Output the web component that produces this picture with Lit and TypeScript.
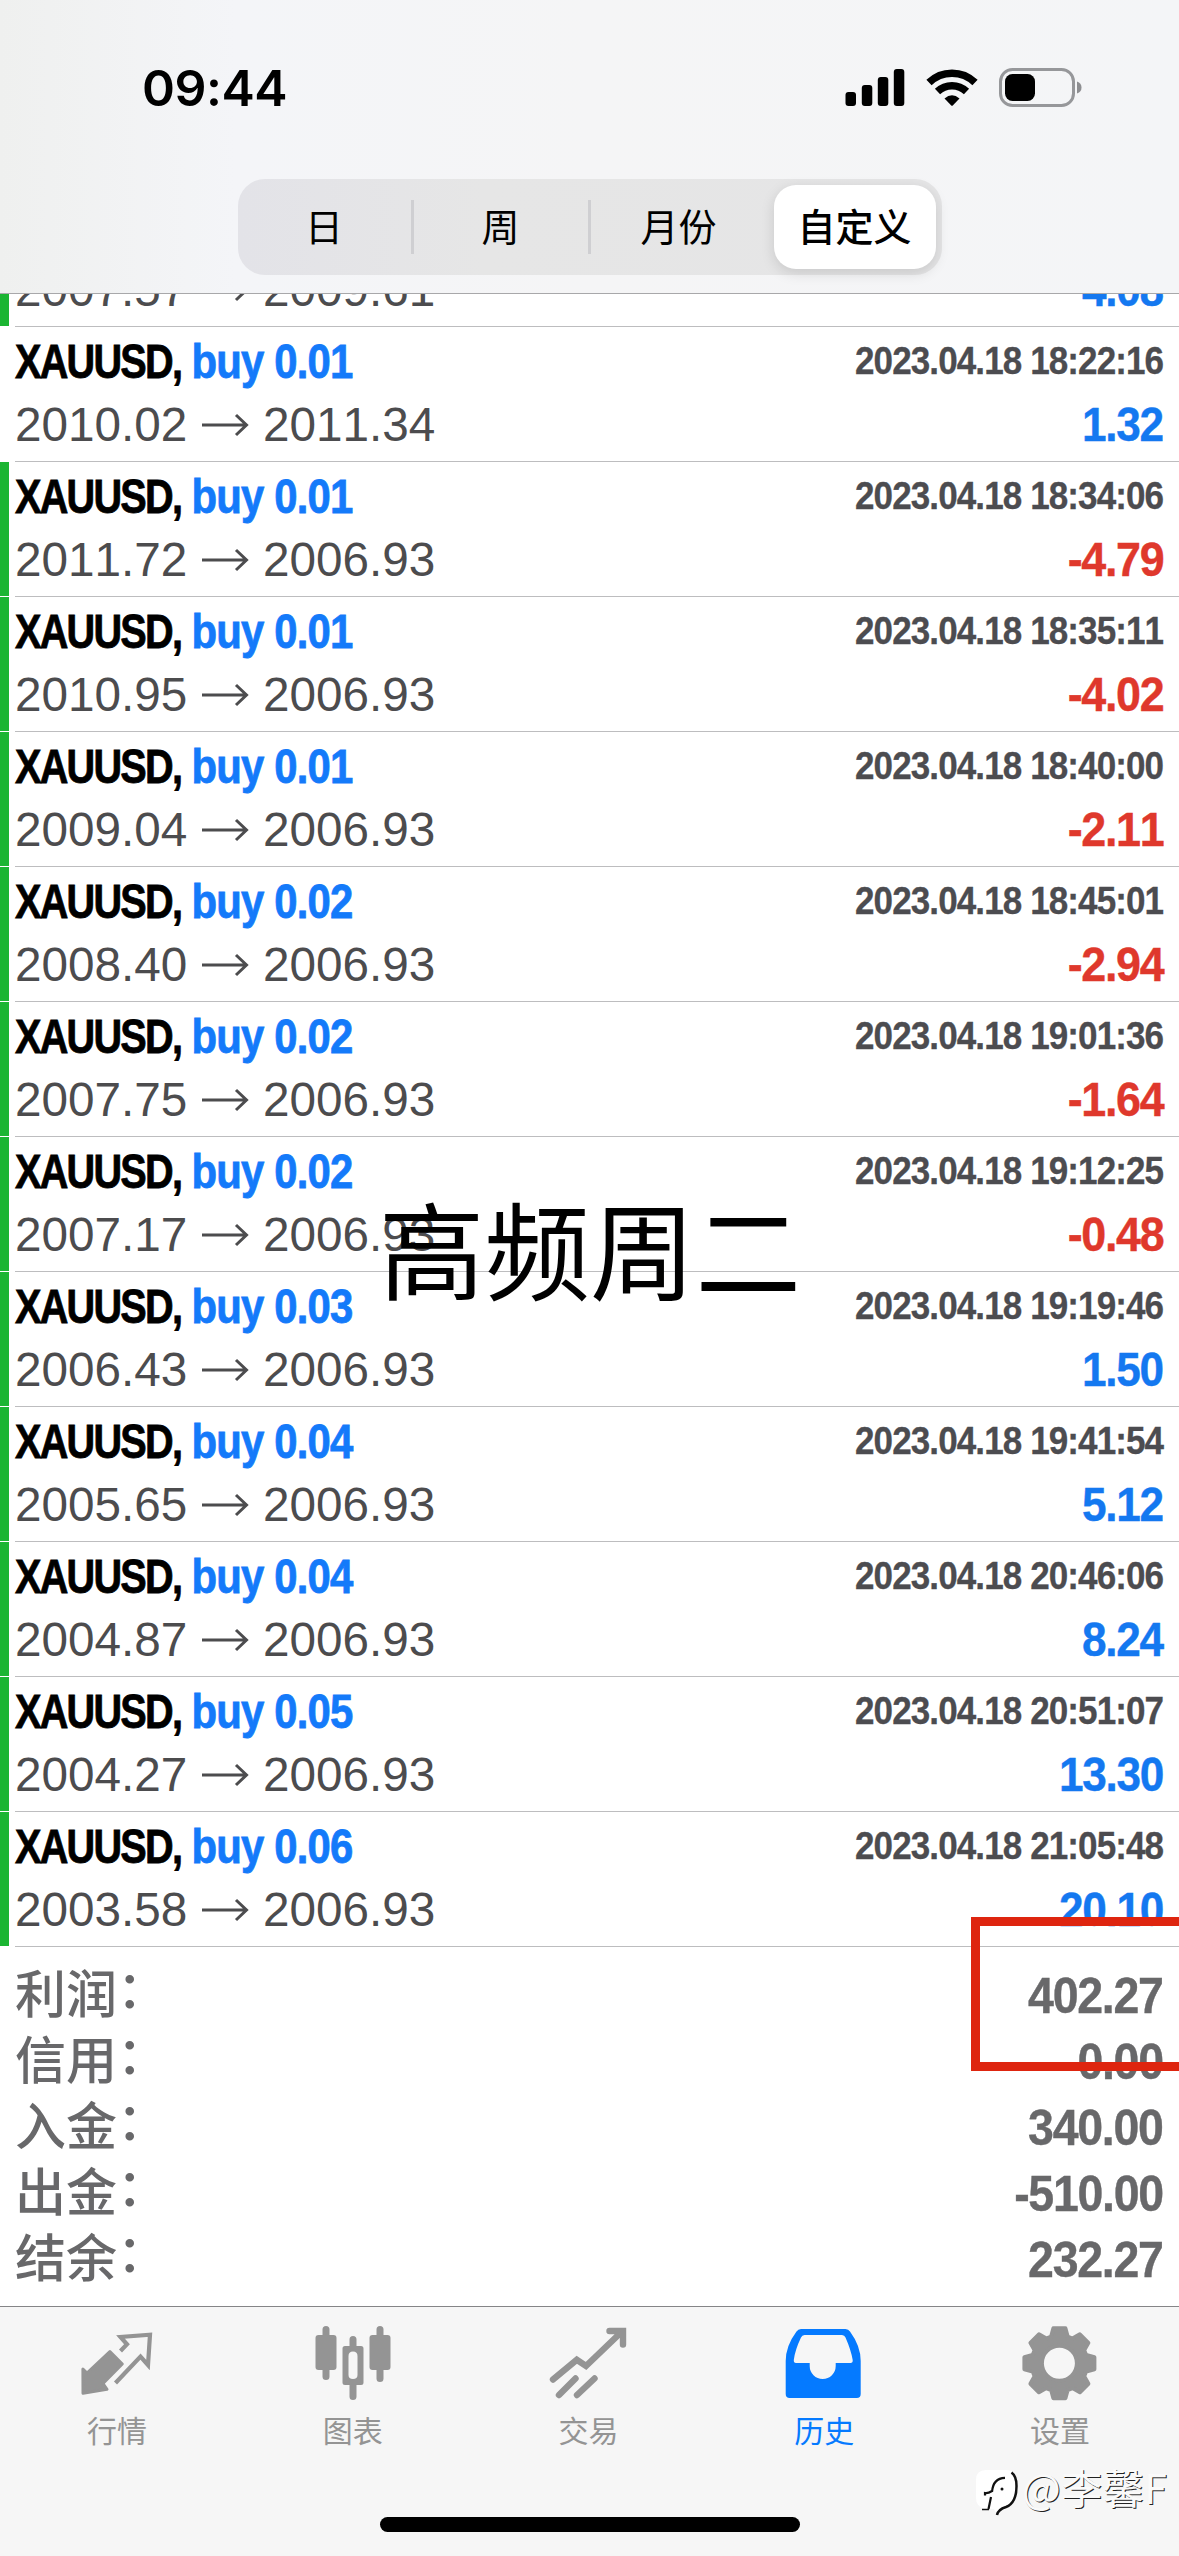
import { LitElement, html, svg, css, nothing } from "lit";
import { customElement, property } from "lit/decorators.js";
import { classMap } from "lit/directives/class-map.js";

type Deal = { lots?: string; open: string; close: string; time?: string; profit: string; marked: boolean };

const DEALS: Deal[] = [
  { open: "2007.57", close: "2009.61", profit: "4.08", marked: true },
  { lots: "0.01", open: "2010.02", close: "2011.34", time: "2023.04.18 18:22:16", profit: "1.32", marked: false },
  { lots: "0.01", open: "2011.72", close: "2006.93", time: "2023.04.18 18:34:06", profit: "-4.79", marked: true },
  { lots: "0.01", open: "2010.95", close: "2006.93", time: "2023.04.18 18:35:11", profit: "-4.02", marked: true },
  { lots: "0.01", open: "2009.04", close: "2006.93", time: "2023.04.18 18:40:00", profit: "-2.11", marked: true },
  { lots: "0.02", open: "2008.40", close: "2006.93", time: "2023.04.18 18:45:01", profit: "-2.94", marked: true },
  { lots: "0.02", open: "2007.75", close: "2006.93", time: "2023.04.18 19:01:36", profit: "-1.64", marked: true },
  { lots: "0.02", open: "2007.17", close: "2006.93", time: "2023.04.18 19:12:25", profit: "-0.48", marked: true },
  { lots: "0.03", open: "2006.43", close: "2006.93", time: "2023.04.18 19:19:46", profit: "1.50", marked: true },
  { lots: "0.04", open: "2005.65", close: "2006.93", time: "2023.04.18 19:41:54", profit: "5.12", marked: true },
  { lots: "0.04", open: "2004.87", close: "2006.93", time: "2023.04.18 20:46:06", profit: "8.24", marked: true },
  { lots: "0.05", open: "2004.27", close: "2006.93", time: "2023.04.18 20:51:07", profit: "13.30", marked: true },
  { lots: "0.06", open: "2003.58", close: "2006.93", time: "2023.04.18 21:05:48", profit: "20.10", marked: true },
];

const TOTALS: [string, string][] = [
  ["利润", "402.27"],
  ["信用", "0.00"],
  ["入金", "340.00"],
  ["出金", "-510.00"],
  ["结余", "232.27"],
];

// Eight-toothed outline around (39.4, 41.3).
const GEAR = (() => {
  const pts: string[] = [];
  for (let i = 0; i < 8; i++) {
    const c = (i * Math.PI) / 4;
    for (const [d, r] of [[-0.3, 28], [-0.17, 35.5], [0.17, 35.5], [0.3, 28]]) {
      pts.push(`${(39.4 + r * Math.sin(c + d)).toFixed(2)} ${(41.3 - r * Math.cos(c + d)).toFixed(2)}`);
    }
  }
  return `M${pts.join("L")}Z`;
})();

const ICONS = {
  quotes: svg`
    <path d="M5.900 47 L10 51 L32.900 29.500 L45.300 42 L26 61.500 L30 67.300 L6 71.300 Z" fill="currentColor" stroke="currentColor" stroke-width="3" stroke-linejoin="round"/>
    <path d="M43.500 29 L50 22.300 L43.500 15 L73 12.700 L71 43 L63.500 34.500 L38.500 61" fill="none" stroke="currentColor" stroke-width="4.200"/>`,
  charts: svg`
    <path d="M13 7.500V54.500 M67 7.500V56.500 M40 17.500V26 M40 62V74.500" stroke="currentColor" stroke-width="7" stroke-linecap="round"/>
    <rect x="2.500" y="13" width="21" height="35" rx="3" fill="currentColor"/>
    <rect x="56.500" y="13" width="21" height="35" rx="3" fill="currentColor"/>
    <path fill="#f6f6f6" d="M34 28H46V60H34Z"/>
    <path fill="currentColor" fill-rule="evenodd" d="M32 24H48Q50.500 24 50.500 26.500V60.500Q50.500 63 48 63H32Q29.500 63 29.500 60.500V26.500Q29.500 24 32 24Z M40 29.500Q35.500 29.500 35.500 34V53Q35.500 57 40 57Q44.500 57 44.500 53V34Q44.500 29.500 40 29.500Z"/>`,
  trade: svg`
    <g fill="none" stroke="currentColor" stroke-width="6.400" stroke-linecap="round">
      <path d="M5 57.500 L28.800 37.800 L38 44 L74 9.500 M61.500 9 H75 V22.500"/>
      <path d="M11 73 L27.500 56.500 M29 73 L46.500 56.500"/>
    </g>`,
  history: svg`
    <path fill="currentColor" fill-rule="evenodd" d="M17 7 H61.500 Q64.500 7 66 9.500 Q76.700 24 76.700 39 V72 Q76.700 76 72.700 76 H5.700 Q1.700 76 1.700 72 V39 Q1.700 24 12.500 9.500 Q14 7 17 7 Z M20.500 13 Q18 13 17 15.500 Q11 28 9.800 38 Q9.600 41 12 41 H25.700 V44 A13 13 0 0 0 51.700 44 V41 H66.500 Q69 41 68.700 38 Q67 28 61.500 15.500 Q60.500 13 58 13 Z"/>`,
  settings: svg`
    <path d="${GEAR} M39.400 23.800a17.500 17.500 0 1 0 0 35a17.500 17.500 0 1 0 0-35Z" fill="currentColor" fill-rule="evenodd" stroke="currentColor" stroke-width="4" stroke-linejoin="round"/>`,
};

@customElement("status-bar")
class StatusBar extends LitElement {
  static styles = css`
    :host { display: flex; height: 179px; box-sizing: border-box; padding: 60px 97px 0 142px; justify-content: space-between; align-items: flex-start; }
    .time { font: 600 50px/56px Inter, "Liberation Sans", sans-serif; letter-spacing: -0.5px; color: #000; }
    .icons { display: block; margin-top: 7px; }
  `;
  render() {
    return html`
      <span class="time">09:44</span>
      <svg class="icons" width="238" height="42" viewBox="844 67 238 42">
        <rect x="845.500" y="92" width="10.500" height="14" rx="3"/>
        <rect x="861.800" y="85" width="10.500" height="21" rx="3"/>
        <rect x="877.800" y="77" width="10.500" height="29" rx="3"/>
        <rect x="893.800" y="69" width="10.500" height="37" rx="3"/>
        <g fill="none" stroke="#000" stroke-width="7.500">
          <path d="M929 82.500 A33 33 0 0 1 975 82.500"/>
          <path d="M937.500 91.500 A21 21 0 0 1 966.500 91.500"/>
        </g>
        <path d="M944.500 98.500 Q952 92 959.500 98.500 L953 105.200 Q952 106.200 951 105.200 Z"/>
        <rect x="1000.500" y="69.500" width="73" height="36" rx="12" fill="none" stroke="#96979a" stroke-width="3"/>
        <rect x="1005" y="74" width="30" height="27" rx="7.500"/>
        <path d="M1077 81.500 Q1081.500 83 1081.500 87.500 T1077 93.500 Z" fill="#8d8e91"/>
      </svg>`;
  }
}

@customElement("period-switch")
class PeriodSwitch extends LitElement {
  static styles = css`
    :host { display: grid; grid-template-columns: 176px 177px 183px 162px; width: 704px; height: 96px; margin: 0 auto; box-sizing: border-box; border-radius: 27px; background: linear-gradient(90deg, #e3e3e8, #e6e6e6 35%, #e5e5e6); padding: 6px 5px 6px 0; align-items: center; }
    .seg { height: 54px; box-sizing: border-box; border-right: 3px solid #cfcfd2; text-align: center; font: 400 38px/50px "Noto Sans CJK SC", sans-serif; color: #000; }
    .wide { border-color: transparent; padding-right: 4px; }
    .on { height: 84px; border: 0; background: #fff; border-radius: 22px; font-weight: 500; line-height: 80px; box-shadow: 0 4px 14px rgba(0, 0, 0, 0.13); }
  `;
  render() {
    return html`<span class="seg">日</span><span class="seg">周</span><span class="seg wide">月份</span><span class="seg on">自定义</span>`;
  }
}

@customElement("deal-row")
class DealRow extends LitElement {
  @property({ attribute: false }) deal!: Deal;
  static styles = css`
    :host { display: flex; height: 135px; font-family: "Liberation Sans", sans-serif; font-kerning: none; }
    .mark { width: 9px; height: 134px; flex: none; }
    .marked { background: #1bb532; }
    .body { flex: 1; margin-left: 6px; padding: 0 16px 0 0; border-bottom: 1px solid #bdbdbf; box-sizing: border-box; }
    .line { display: flex; justify-content: space-between; white-space: nowrap; }
    .top { height: 66px; }
    .name { font: bold 49px/68px "Liberation Sans", sans-serif; font-kerning: none; letter-spacing: -2.2px; transform: scaleX(0.81); transform-origin: 0 0; color: #000; -webkit-text-stroke: 0.8px currentColor; }
    .side { display: inline-block; color: #147afa; letter-spacing: -1px; margin-left: 1px; transform: scaleX(1.055); transform-origin: 0 0; }
    .time { font: bold 39px/68px "Liberation Sans", sans-serif; font-kerning: none; letter-spacing: -1px; transform: scaleX(0.898); transform-origin: 100% 0; color: #4c4c50; -webkit-text-stroke: 0.3px currentColor; }
    .prices { display: flex; align-items: center; font-size: 47.7px; line-height: 64px; color: #4c4c4e; }
    .arrow { margin: 0 12.500px 0 13px; }
    .profit { font: bold 48px/64px "Liberation Sans", sans-serif; font-kerning: none; letter-spacing: -1.4px; transform: scaleX(0.92); transform-origin: 100% 0; color: #1478f0; -webkit-text-stroke: 0.4px currentColor; }
    .loss { color: #df382c; transform: scaleX(0.935); }
  `;
  render() {
    const d = this.deal;
    return html`
      <div class=${classMap({ mark: true, marked: d.marked })}></div>
      <div class="body">
        <div class="line top">
          ${d.time
            ? html`<span class="name">XAUUSD, <span class="side">buy ${d.lots}</span></span>
                <span class="time">${d.time}</span>`
            : nothing}
        </div>
        <div class="line">
          <span class="prices">${d.open}<svg class="arrow" width="50" height="24" viewBox="0 0 50 24"><path d="M2 12H46M36 2L46.500 12L36 22" fill="none" stroke="currentColor" stroke-width="3"/></svg>${d.close}</span>
          <span class=${classMap({ profit: true, loss: d.profit.startsWith("-") })}>${d.profit}</span>
        </div>
      </div>`;
  }
}

@customElement("account-totals")
class AccountTotals extends LitElement {
  static styles = css`
    :host { display: block; padding: 15px 16px 0 15px; box-sizing: border-box; height: 359px; }
    .row { display: flex; justify-content: space-between; height: 66px; color: #68686a; }
    .label { display: flex; font: 500 51px/59px "Noto Sans CJK SC", sans-serif; }
    .colon { line-height: 49px; }
    .value { font: bold 50px/68px "Liberation Sans", sans-serif; font-kerning: none; letter-spacing: -1.4px; transform: scaleX(0.93); transform-origin: 100% 0; -webkit-text-stroke: 0.4px currentColor; }
  `;
  render() {
    return html`${TOTALS.map(
      ([k, v]) => html`<div class="row"><span class="label">${k}<span class="colon">：</span></span><span class="value">${v}</span></div>`
    )}`;
  }
}

@customElement("tab-bar")
class TabBar extends LitElement {
  static styles = css`
    :host { display: flex; flex-direction: column; height: 250px; box-sizing: border-box; background: #f6f6f6; border-top: 1px solid #858587; }
    .tabs { display: flex; height: 210px; }
    .tab { flex: 1; display: flex; flex-direction: column; align-items: center; color: #949494; padding: 15px 2px 0 0; }
    .active { color: #057aff; }
    .icon { display: block; }
    .name { font: 400 30px/42px "Noto Sans CJK SC", sans-serif; }
    .home { width: 420px; height: 15px; border-radius: 8px; background: #000; margin: 0 auto; }
  `;
  render() {
    const tabs = [
      [ICONS.quotes, "行情"],
      [ICONS.charts, "图表"],
      [ICONS.trade, "交易"],
      [ICONS.history, "历史"],
      [ICONS.settings, "设置"],
    ] as const;
    return html`
      <div class="tabs">
        ${tabs.map(
          ([icon, name]) => html`<div class=${classMap({ tab: true, active: name === "历史" })}>
            <svg class="icon" width="80" height="86" viewBox="0 0 80 86">${icon}</svg>
            <span class="name">${name}</span>
          </div>`
        )}
      </div>
      <div class="home"></div>`;
  }
}

@customElement("app-root")
class AppRoot extends LitElement {
  static styles = css`
    :host { display: block; width: 1179px; height: 2556px; position: relative; overflow: hidden; background: #fff; }
    .screen { display: flex; flex-direction: column; height: 2556px; }
    .header { height: 294px; flex: none; box-sizing: border-box; border-bottom: 1px solid #a8a8aa; background: linear-gradient(90deg, #eff0ef, #f4f5f8 20%, #f5f5f6 50%, #f4f5f7); }
    .list { height: 1653px; flex: none; overflow: hidden; display: flex; flex-direction: column; justify-content: flex-end; }
    .list deal-row { flex: none; }
    .caption { position: absolute; left: 379px; top: 1168px; font: 400 105.500px/156px "Noto Sans CJK SC", sans-serif; color: #000; white-space: nowrap; }
    .frame { position: absolute; left: 971px; top: 1917px; width: 230px; height: 154px; box-sizing: border-box; border: 9px solid #de250f; }
    .credit { position: absolute; left: 976px; top: 2466px; display: flex; align-items: flex-start; color: #fafafa; font: 400 41px/40px "Noto Sans CJK SC", sans-serif; white-space: nowrap; }
    .author { text-shadow: 1px 1px 0.500px #222; letter-spacing: 0.5px; }
  `;
  render() {
    return html`
      <div class="screen">
        <div class="header">
          <status-bar></status-bar>
          <period-switch></period-switch>
        </div>
        <div class="list">${DEALS.map((d) => html`<deal-row .deal=${d}></deal-row>`)}</div>
        <account-totals></account-totals>
        <tab-bar></tab-bar>
      </div>
      <div class="caption">高频周二</div>
      <div class="frame"></div>
      <div class="credit">
        <svg width="46" height="52" viewBox="0 0 46 52">
          <path d="M10 4H30Q40 4 40 15V23Q40 38 30 41Q23 43 20.500 48L18 43H8Q0 40 0 32V14Q0 4 10 4Z" fill="#fff"/>
          <path d="M35.500 6.500 Q40.500 10 40.500 20 Q40.500 37 30 41 Q22 43.500 21 49" fill="none" stroke="#111" stroke-width="2.500"/>
          <path d="M12.500 43 L15 31 M9 29.500 V27 Q12 27.500 16 25 M16 26 Q17 12 29 11.800" fill="none" stroke="#111" stroke-width="2.200"/>
          <path d="M6 43.500H13" stroke="#111" stroke-width="1.500"/>
          <circle cx="26" cy="23" r="1.500" fill="#111"/>
        </svg>
        <span class="author">@李馨F</span>
      </div>`;
  }
}
